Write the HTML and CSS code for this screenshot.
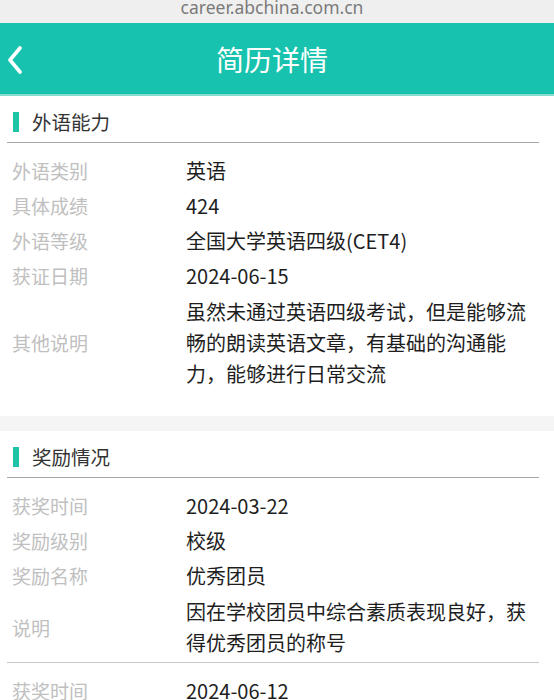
FILE: index.html
```html
<!DOCTYPE html>
<html lang="zh-CN">
<head>
<meta charset="utf-8">
<title>简历详情</title>
<link rel="stylesheet" href="styles.css">
</head>
<body>
<div class="urlbar"><span class="url">career.abchina.com.cn</span></div>
<header class="topbar">
  <span class="back">
    <svg width="16" height="28" viewBox="0 0 16 28"><path d="M13 2 L3 14 L13 26" fill="none" stroke="#fff" stroke-width="3.6" stroke-linecap="round" stroke-linejoin="round"/></svg>
  </span>
  <h1 class="title">简历详情</h1>
</header>
<main class="page">
  <section class="card">
    <div class="card-head"><span class="mark"></span><span class="card-title">外语能力</span></div>
    <div class="group">
      <div class="row"><span class="label">外语类别</span><span class="value">英语</span></div>
      <div class="row"><span class="label">具体成绩</span><span class="value">424</span></div>
      <div class="row"><span class="label">外语等级</span><span class="value">全国大学英语四级(CET4)</span></div>
      <div class="row"><span class="label">获证日期</span><span class="value">2024-06-15</span></div>
      <div class="row multi"><span class="label">其他说明</span><span class="value">虽然未通过英语四级考试，但是能够流畅的朗读英语文章，有基础的沟通能力，能够进行日常交流</span></div>
    </div>
  </section>
  <section class="card">
    <div class="card-head"><span class="mark"></span><span class="card-title">奖励情况</span></div>
    <div class="group divided">
      <div class="row"><span class="label">获奖时间</span><span class="value">2024-03-22</span></div>
      <div class="row"><span class="label">奖励级别</span><span class="value">校级</span></div>
      <div class="row"><span class="label">奖励名称</span><span class="value">优秀团员</span></div>
      <div class="row multi"><span class="label">说明</span><span class="value">因在学校团员中综合素质表现良好，获得优秀团员的称号</span></div>
    </div>
    <div class="group">
      <div class="row"><span class="label">获奖时间</span><span class="value">2024-06-12</span></div>
    </div>
  </section>
</main>
</body>
</html>
```
FILE: styles.css
```css
html, body {
  margin: 0;
  padding: 0;
}
body {
  width: 554px;
  height: 700px;
  overflow: hidden;
  background: #f5f5f6;
  font-family: "Noto Sans CJK SC", "Noto Sans", sans-serif;
}
.urlbar {
  height: 23px;
  background: #efefef;
  display: flex;
  justify-content: center;
  align-items: flex-start;
  overflow: hidden;
}
.url {
  font-family: "Noto Sans", "Open Sans", sans-serif;
  font-size: 17.5px;
  line-height: 14px;
  color: #7a7a7a;
  margin-left: -10px;
}
.topbar {
  height: 71px;
  background: #17c3ae;
  border-bottom: 2px solid #86dccf;
  display: flex;
  align-items: center;
  position: relative;
}
.back {
  position: absolute;
  left: 7px;
  top: 23px;
  display: flex;
}
.title {
  margin: 0 auto;
  font-size: 28px;
  font-weight: 400;
  color: #fff;
  line-height: 36px;
  transform: translateX(-5px);
}
.page {
  display: flex;
  flex-direction: column;
  gap: 15px;
}
.card {
  background: #fff;
  padding: 0 15px 27px 7px;
}
.card-head {
  display: flex;
  align-items: center;
  gap: 13px;
  padding: 16px 0 10px 6px;
  border-bottom: 1px solid #a8a8a8;
}
.mark {
  width: 6px;
  height: 20px;
  background: #1fc3a6;
}
.card-title {
  font-size: 19.5px;
  line-height: 20px;
  color: #333;
}
.group {
  padding-top: 10px;
}
.group.divided {
  padding-bottom: 4px;
  border-bottom: 1px solid #c8c8c8;
}
.row {
  display: flex;
  align-items: center;
  padding-left: 5px;
}
.label {
  width: 174px;
  flex: none;
  font-size: 19px;
  line-height: 35px;
  color: #c0c0c0;
}
.value {
  flex: 1;
  font-size: 20px;
  line-height: 35px;
  color: #1e1e1e;
}
.row.multi {
  padding-top: 3px;
}
.row.multi .value {
  line-height: 31px;
}
```
